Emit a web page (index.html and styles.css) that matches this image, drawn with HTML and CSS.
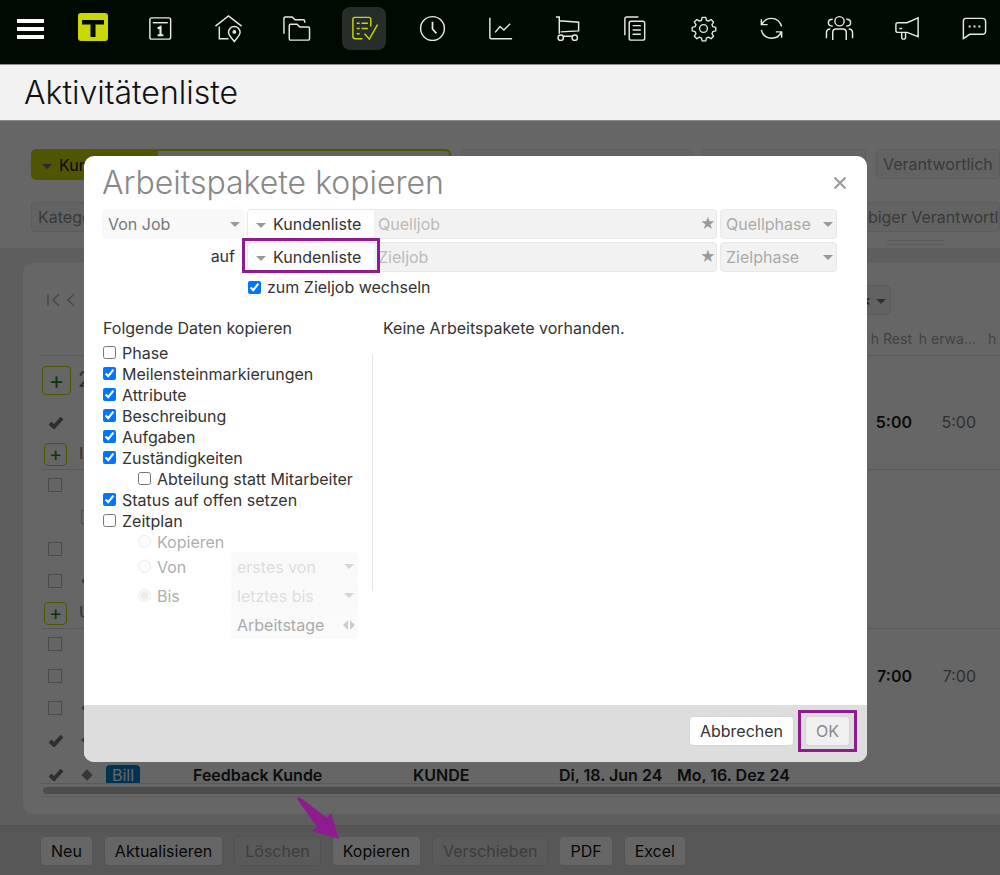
FILE: index.html
```
<!DOCTYPE html>
<html lang="de">
	<head>
		<meta charset="utf-8">
		<title>Aktivitätenliste</title>
		<link rel="stylesheet" href="styles.css">
	</head>
	<body>
		<header class="topbar">
			<button class="menu" type="button" aria-label="Menü"><span></span><span></span><span></span></button>
			<nav class="nav">
				<a href="#" aria-label="Start"><svg class="logo" viewBox="0 0 30 28"><rect width="30" height="28" rx="3" fill="#c8d800"/><path d="M4 7h22v4.500H17.500V24h-5V11.500H4z" fill="#000a00"/></svg></a>
				<a href="#" aria-label="Kalender"><svg viewBox="0 0 30 30"><rect x="4" y="4" width="21.500" height="22" rx="2"/><path d="M7 9h15.500"/><path d="M12 15l3-1.500V22M12 22h6" stroke-width="2.200"/></svg></a>
				<a href="#" aria-label="Standort"><svg viewBox="0 0 30 30"><path d="M1.500 12.500L15 2l13.500 10.500M5.500 13v12.500h9.500M21 28.500c-3-4-6-6.500-6-9.500a6 6 0 0 1 12 0c0 3-3 5.500-6 9.500z"/><circle cx="21" cy="18.500" r="1.200" fill="#fff"/></svg></a>
				<a href="#" aria-label="Projekte"><svg viewBox="0 0 30 30"><path d="M2 20.500V4.500Q2 3 3.500 3h7l3 3h8.500q1.500 0 1.500 1.500V9"/><path d="M7.500 12q0-1.500 1.500-1.500h6.500l3 3H27q1.500 0 1.500 1.500v10.500q0 1.500-1.500 1.500H9q-1.500 0-1.500-1.500z"/></svg></a>
				<a class="active" href="#" aria-label="Aktivitäten"><svg viewBox="0 0 30 30"><path d="M13 25.500H5.500Q3 25.500 3 23V5.500Q3 3.500 5 3.500h14.500q2 0 2 2V13M7 9.500h3M12 9.500h6.500M7 15h3M12 15h6.500M7 20.500h3M15 20.500l5 5.500 8.500-15"/></svg></a>
				<a href="#" aria-label="Zeiten"><svg viewBox="0 0 30 30"><circle cx="15" cy="15" r="12.300"/><path d="M15 8v7.500l4 4.500" stroke-width="1.800"/></svg></a>
				<a href="#" aria-label="Auswertung"><svg viewBox="0 0 30 30"><path d="M4 4v20q0 1.500 1.500 1.500H27M9.500 19l5-6 4 3.500L25 10"/></svg></a>
				<a href="#" aria-label="Einkauf"><svg viewBox="0 0 30 30"><path d="M3 3h3.500v17.500M6.500 7L26.500 8.500v9L8 18.500M10.500 23h9"/><circle cx="8" cy="24.500" r="2.800"/><circle cx="22.500" cy="24.500" r="2.800"/></svg></a>
				<a href="#" aria-label="Dokumente"><svg viewBox="0 0 30 30"><path d="M4 22V5q0-2 2-2h12M12 12h8.500M12 16.500h8.500M12 21h8.500"/><rect x="8.500" y="7.500" width="16" height="19.500" rx="2"/></svg></a>
				<a href="#" aria-label="Einstellungen"><svg viewBox="-1 -1 32 32"><circle cx="15" cy="15" r="4.300"/><path d="M13 3.500h4l.7 3.200 2.300 1 2.800-1.800 2.800 2.800-1.800 2.800 1 2.300 3.200.7v4l-3.200.7-1 2.300 1.800 2.800-2.800 2.800-2.800-1.800-2.300 1-.7 3.200h-4l-.7-3.200-2.300-1-2.800 1.800-2.800-2.800 1.800-2.800-1-2.300-3.200-.7v-4l3.200-.7 1-2.300-1.800-2.800 2.800-2.800 2.800 1.800 2.300-1z" stroke-linejoin="round" transform="translate(.5 -.8)"/></svg></a>
				<a href="#" aria-label="Abgleich"><svg viewBox="0 0 30 30"><path d="M5 11Q8 4.500 15 4.500q8 0 10.500 8.500M4.500 5.500V11H11M4.500 16.500Q6.500 25 15 25q7.500 0 10-6M25.500 24.500V18.500H19.500"/></svg></a>
				<a href="#" aria-label="Team"><svg viewBox="0 0 30 30"><circle cx="15" cy="7.500" r="4.800"/><path d="M8 27V19q0-3.500 3.500-3.500h7q3.500 0 3.500 3.500v8M8 5.500Q3.500 5.500 3.500 9T8 12.500M22 5.500q4.500 0 4.500 3.500T22 12.500M1.500 25v-5.500q0-4 4-4M28.500 25v-5.500q0-4-4-4"/></svg></a>
				<a href="#" aria-label="Neuigkeiten"><svg viewBox="0 0 30 30"><path d="M5 9h9.500L26 4v19.500L14.500 19H5q-2 0-2-2v-6q0-2 2-2zM9 19v5q0 2 2 2t2-2v-5M6.500 15h3"/></svg></a>
				<a href="#" aria-label="Chat"><svg viewBox="0 0 30 30"><path d="M6 4.500h17q3.500 0 3.500 3.500v9.500q0 3.500-3.500 3.500H10l-6.500 4.500V7.500Q3.500 4.500 6 4.500z"/><path d="M9 13h2M14 13h2M19 13h2" stroke-width="2"/></svg></a>
			</nav>
		</header>
		<h1 class="page-title">Aktivitätenliste</h1>

		<div class="stage">
			<main class="workspace">
				<form class="filters">
					<div class="filter-row">
						<div class="filter-job">
							<button type="button"><i class="caret"></i>Kundenliste</button>
							<input type="text" aria-label="Job">
						</div>
						<input type="text" aria-label="Phase">
						<input type="text" aria-label="Status">
						<input type="text" aria-label="Verantwortlich" placeholder="Verantwortlich">
					</div>
					<div class="filter-row second">
						<input type="text" aria-label="Kategorie" placeholder="Kategorie">
						<input type="text" aria-label="Beliebiger Verantwortlicher" placeholder="Beliebiger Verantwortlicher">
					</div>
					<div class="grip"></div>
				</form>

				<section class="card">
					<div class="pager">
						<button type="button" aria-label="Erste Seite"><svg width="14" height="14" viewBox="0 0 14 14"><path d="M1 1v12M12 1L6 7l6 6"/></svg></button>
						<button type="button" aria-label="Zurück"><svg width="14" height="14" viewBox="0 0 14 14"><path d="M9 1L3 7l6 6"/></svg></button>
						<button class="columns" type="button" aria-label="Spalten">×<i class="caret"></i></button>
					</div>
					<div class="table-wrap">
						<table>
							<colgroup>
								<col class="c-check"><col class="c-mark"><col class="c-tag"><col class="c-name"><col class="c-who"><col class="c-from"><col class="c-to"><col class="c-rest"><col class="c-exp"><col>
							</colgroup>
							<thead>
								<tr><th></th><th></th><th></th><th></th><th></th><th></th><th></th><th class="num">h Rest</th><th class="num">h erwa...</th><th>h</th></tr>
							</thead>
							<tbody>
								<tr class="group big"><td colspan="10"><button class="plus" type="button" aria-label="Aufklappen">+</button>2</td></tr>
								<tr><td><svg class="tick" viewBox="0 0 16 13"><path d="M2 7l4 4 8-9"/></svg></td><td colspan="6"></td><td class="num"><b>5:00</b></td><td class="num">5:00</td><td></td></tr>
								<tr class="group line"><td colspan="10"><button class="plus" type="button" aria-label="Aufklappen">+</button>I</td></tr>
								<tr><td><span class="box"></span></td><td colspan="9"></td></tr>
								<tr><td></td><td><span class="box child"></span></td><td colspan="8"></td></tr>
								<tr><td><span class="box"></span></td><td colspan="9"></td></tr>
								<tr><td><span class="box"></span></td><td><i class="diamond"></i></td><td colspan="8"></td></tr>
								<tr class="group line"><td colspan="10"><button class="plus" type="button" aria-label="Aufklappen">+</button>U</td></tr>
								<tr><td><span class="box"></span></td><td colspan="9"></td></tr>
								<tr><td><span class="box"></span></td><td colspan="6"></td><td class="num"><b>7:00</b></td><td class="num">7:00</td><td></td></tr>
								<tr><td><span class="box"></span></td><td><i class="diamond"></i></td><td colspan="8"></td></tr>
								<tr><td><svg class="tick" viewBox="0 0 16 13"><path d="M2 7l4 4 8-9"/></svg></td><td><i class="diamond"></i></td><td colspan="8"></td></tr>
								<tr class="strong"><td><svg class="tick" viewBox="0 0 16 13"><path d="M2 7l4 4 8-9"/></svg></td><td><i class="diamond"></i></td><td><span class="tag">Bill</span></td><td>Feedback Kunde</td><td>KUNDE</td><td>Di, 18. Jun 24</td><td>Mo, 16. Dez 24</td><td></td><td></td><td></td></tr>
							</tbody>
						</table>
					</div>
					<div class="scroll"><div></div></div>
				</section>
			</main>

			<footer class="actions">
				<button type="button">Neu</button>
				<button type="button">Aktualisieren</button>
				<button type="button" disabled>Löschen</button>
				<button type="button">Kopieren</button>
				<button type="button" disabled>Verschieben</button>
				<button type="button">PDF</button>
				<button type="button">Excel</button>
			</footer>

			<div class="overlay">
				<form class="dialog" role="dialog" aria-labelledby="dlgTitle">
					<div class="dialog-head">
						<h2 id="dlgTitle">Arbeitspakete kopieren</h2>
						<button type="button" aria-label="Schließen"><svg width="14" height="14" viewBox="0 0 14 14"><path d="M1.500 1.500l11 11M12.500 1.500l-11 11"/></svg></button>
					</div>
					<div class="job-grid">
						<select class="soft" aria-label="Quelle"><option>Von Job</option></select>
						<div class="combo">
							<button type="button"><i class="caret"></i>Kundenliste</button>
							<input type="text" aria-label="Quelljob" placeholder="Quelljob">
							<span class="star">★</span>
						</div>
						<select aria-label="Quellphase"><option>Quellphase</option></select>
						<label class="to" for="target">auf</label>
						<div class="combo">
							<button type="button"><i class="caret"></i>Kundenliste</button>
							<input type="text" id="target" placeholder="Zieljob">
							<span class="star">★</span>
							<span class="mark mark-combo"></span>
						</div>
						<select aria-label="Zielphase"><option>Zielphase</option></select>
						<label class="check switch"><input type="checkbox" checked>zum Zieljob wechseln</label>
					</div>
					<div class="options">
						<fieldset>
							<legend>Folgende Daten kopieren</legend>
							<label class="check"><input type="checkbox">Phase</label>
							<label class="check"><input type="checkbox" checked>Meilensteinmarkierungen</label>
							<label class="check"><input type="checkbox" checked>Attribute</label>
							<label class="check"><input type="checkbox" checked>Beschreibung</label>
							<label class="check"><input type="checkbox" checked>Aufgaben</label>
							<label class="check"><input type="checkbox" checked>Zuständigkeiten</label>
							<label class="check sub"><input type="checkbox">Abteilung statt Mitarbeiter</label>
							<label class="check"><input type="checkbox" checked>Status auf offen setzen</label>
							<label class="check"><input type="checkbox">Zeitplan</label>
							<label class="check sub off"><input type="radio" name="plan" disabled>Kopieren</label>
							<div class="plan">
								<label class="check off"><input type="radio" name="plan" disabled>Von</label>
								<select aria-label="Von" disabled><option>erstes von</option></select>
								<label class="check off"><input type="radio" name="plan" checked disabled>Bis</label>
								<select aria-label="Bis" disabled><option>letztes bis</option></select>
								<button class="unit" type="button" disabled>Arbeitstage<svg width="12" height="10" viewBox="0 0 12 10"><path d="M5 0v10L0 5zM7 0v10l5-5z"/></svg></button>
							</div>
						</fieldset>
						<div class="divider"></div>
						<p>Keine Arbeitspakete vorhanden.</p>
					</div>
					<div class="dialog-foot">
						<button type="button">Abbrechen</button>
						<div class="ok-wrap">
							<button type="submit" disabled>OK</button>
							<span class="mark mark-ok"></span>
						</div>
					</div>
				</form>
			</div>
			<svg class="arrow" viewBox="0 0 48 48"><path d="M1 3Q2 0 5 2l26 20 4-5 8 26-27-8 5-4z"/></svg>
		</div>
	</body>
</html>
```
FILE: styles.css
```
* {
	box-sizing: border-box;
}

body {
	margin: 0;
	height: 100vh;
	display: flex;
	flex-direction: column;
	overflow: hidden;
	font-family: Inter, sans-serif;
	font-size: 16px;
	line-height: 20px;
	color: #333;
}

button, input, select {
	font: inherit;
	color: inherit;
}

button {
	cursor: pointer;
	padding: 0;
	border: none;
	background: none;
}

/* top navigation */
.topbar {
	display: flex;
	height: 65px;
	padding: 7px 3px 0 17px;
	background: #000a00;
	border-bottom: 1px solid #8c918c;
}

.menu {
	display: flex;
	flex-direction: column;
	justify-content: center;
	gap: 4px;
	width: 27px;
	height: 44px;
	margin-right: 27px;
}

.menu span {
	height: 4px;
	background: #fff;
}

.nav {
	flex: 1;
	display: flex;
	justify-content: space-between;
}

.nav a {
	display: flex;
	align-items: center;
	justify-content: center;
	width: 44px;
	height: 43px;
	border-radius: 8px;
}

.nav svg {
	width: 29px;
	height: 29px;
	fill: none;
	stroke: #e6e9e4;
	stroke-width: 1.5;
}

.nav svg.logo {
	width: 30px;
	height: 28px;
	margin-bottom: 3px;
	stroke: none;
}

.nav .active {
	background: #262d2b;
}

.nav .active svg {
	stroke: #c8d800;
}

.page-title {
	margin: 0;
	padding: 0 24px;
	font-size: 32px;
	font-weight: 300;
	line-height: 55px;
	color: #111;
	background: #f2f2f2;
}

/* list behind the dialog */
.stage {
	position: relative;
	flex: 1;
	min-height: 0;
	display: flex;
	flex-direction: column;
}

.workspace {
	flex: 1;
	min-height: 0;
	display: flex;
	flex-direction: column;
	background: #ececec;
}

.filters {
	height: 128px;
	padding: 29px 0 0 31px;
	background: #fff;
}

.filter-row {
	display: grid;
	grid-template-columns: 420px 231px 164px 1fr;
	gap: 10px;
}

.filter-row.second {
	grid-template-columns: 783px 1fr;
	margin-top: 22px;
}

.filters input {
	min-width: 0;
	width: 100%;
	height: 30px;
	padding: 0 0 0 6px;
	background: #f8f8f8;
	border: 1px solid #e6e6e6;
	border-radius: 4px;
}

.filters input::placeholder {
	color: #909090;
}

.filter-job {
	display: flex;
	height: 31px;
	background: #c8d800;
	border: 2px solid #c8d800;
	border-radius: 5px;
}

.filter-job button {
	width: 125px;
	padding-left: 9px;
	text-align: left;
	flex: none;
	color: #111;
}

.filter-job input {
	flex: 1;
	height: 27px;
	border: none;
	border-radius: 0 4px 4px 0;
}

.caret {
	display: inline-block;
	margin-right: 7px;
	vertical-align: middle;
	border: 5px solid transparent;
	border-top-color: #999;
	border-bottom: none;
}

.filter-job .caret {
	border-top-color: #666;
}

.grip {
	width: 57px;
	height: 5px;
	margin: 8px 0 0 856px;
	border: 1px solid #e4e4e4;
	border-left: none;
	border-right: none;
}

.card {
	flex: 1;
	min-height: 0;
	display: flex;
	flex-direction: column;
	margin: 15px 0 11px 23px;
	padding: 22px 0 17px 18px;
	background: #fff;
	border-radius: 10px 0 0 10px;
}

.pager {
	display: flex;
	align-items: center;
	gap: 4px;
	height: 30px;
	margin-bottom: 9px;
	padding-left: 6px;
}

.pager svg {
	display: block;
	fill: none;
	stroke: #b4b4b4;
	stroke-width: 1.5;
}

.pager .columns {
	width: 110px;
	height: 30px;
	margin-left: 698px;
	padding-right: 4px;
	text-align: right;
	background: #f4f4f4;
	border: 1px solid #e4e4e4;
	border-radius: 4px;
}

.columns .caret {
	margin: 0 0 0 5px;
	border-top-color: #777;
}

.table-wrap {
	flex: 1;
	min-height: 0;
	overflow: hidden;
	border-bottom: 1px solid #e2e2e2;
}

table {
	width: 100%;
	table-layout: fixed;
	border-collapse: collapse;
}

.c-check { width: 29px; }
.c-mark { width: 33px; }
.c-tag { width: 83px; }
.c-name { width: 220px; }
.c-who { width: 146px; }
.c-from { width: 118px; }
.c-to { width: 195px; }
.c-rest { width: 53px; }
.c-exp { width: 64px; }

th {
	height: 31px;
	padding: 0 6px;
	font-size: 14px;
	font-weight: 400;
	text-align: left;
	white-space: nowrap;
	color: #a6a6a6;
	border-bottom: 1px solid #e2e2e2;
}

td {
	height: 32px;
	padding: 0 0 0 7px;
	white-space: nowrap;
	color: #777;
}

td.num, th.num {
	padding: 0 6px 0 0;
	text-align: right;
}

td b, .strong td {
	font-weight: 600;
	color: #222;
}

.strong td {
	height: 37px;
}

.group td {
	padding-left: 3px;
}

.group.big td {
	height: 51px;
	padding-left: 1px;
	font-size: 22px;
}

.line td {
	height: 31px;
	line-height: 24px;
	border-bottom: 1px solid #e2e2e2;
}

.plus {
	width: 23px;
	height: 23px;
	margin-right: 12px;
	font-size: 20px;
	line-height: 20px;
	vertical-align: middle;
	color: #1f8a1f;
	border: 1px solid #c8d800;
	border-radius: 4px;
}

.big .plus {
	width: 29px;
	height: 29px;
	margin-right: 7px;
	font-size: 24px;
}

.box {
	display: block;
	width: 14px;
	height: 14px;
	border: 1px solid #bbb;
}

.box.child {
	margin-left: 4px;
}

.tick {
	display: block;
	width: 16px;
	height: 13px;
	fill: none;
	stroke: #777;
	stroke-width: 4;
}

.diamond {
	display: block;
	width: 8px;
	height: 8px;
	margin-left: 6px;
	background: #888;
	transform: rotate(45deg);
}

.strong .tag {
	margin-left: -4px;
	padding: 0 6px;
	font-weight: 400;
	color: #fff;
	background: #0080cc;
	border-radius: 4px;
}

.scroll {
	height: 13px;
	padding: 3px 0 3px 2px;
	border-bottom: 1px solid #e2e2e2;
}

.scroll div {
	height: 7px;
	background: #bebebe;
	border-radius: 4px 0 0 4px;
}

.actions {
	display: flex;
	gap: 11px;
	height: 50px;
	padding: 10px 40px;
	background: #dadada;
	border-top: 1px solid #d0d0d0;
}

.actions button, .dialog-foot button {
	height: 30px;
	padding: 0 10px;
	background: #fff;
	border: 1px solid #d4d4d4;
	border-radius: 4px;
}

.actions button {
	color: #111;
}

.actions button:disabled {
	color: #999;
	background: #e0e0e0;
	border-color: #ccc;
}

/* dialog */
.overlay {
	position: absolute;
	inset: 0;
	display: flex;
	align-items: flex-start;
	padding: 35px 133px 0 84px;
	background: rgba(0, 0, 0, .6);
	border-top: 1px solid #8a8a8a;
}

.dialog {
	flex: 1;
	background: #fff;
	border-radius: 10px;
	overflow: hidden;
}

.dialog-head {
	display: flex;
	align-items: center;
	justify-content: space-between;
	height: 53px;
	padding: 0 20px 0 18px;
}

.dialog-head h2 {
	margin: 0;
	font-size: 32px;
	font-weight: 300;
	color: #888;
}

.dialog-head button {
	height: 14px;
}

.dialog-head svg {
	display: block;
	fill: none;
	stroke: #999;
	stroke-width: 2;
}

.job-grid {
	display: grid;
	grid-template-columns: 142px 1fr 117px;
	grid-auto-rows: 30px;
	gap: 3px;
	padding: 0 30px 0 18px;
}

select {
	appearance: none;
	min-width: 0;
	padding: 0 16px 0 5px;
	color: #aaa;
	background: #f2f2f2 url("data:image/svg+xml,%3Csvg xmlns='http://www.w3.org/2000/svg' width='10' height='5'%3E%3Cpath d='M0 0h10L5 5z' fill='%23999'/%3E%3C/svg%3E") no-repeat right 3px center;
	border: 1px solid #e8e8e8;
	border-radius: 4px;
	opacity: 1;
}

select.soft {
	color: #777;
	background-color: #f8f8f8;
	border-color: #f8f8f8;
}

.combo {
	position: relative;
	display: flex;
	align-items: center;
	background: #f2f2f2;
	border: 1px solid #e8e8e8;
	border-radius: 4px;
}

.combo button {
	flex: none;
	width: 126px;
	height: 28px;
	padding-left: 8px;
	text-align: left;
	background: #fff;
	border-radius: 4px 0 0 4px;
}

.combo input {
	flex: 1;
	min-width: 0;
	padding: 0 4px;
	background: none;
	border: none;
}

.combo input::placeholder {
	color: #bbb;
}

.star {
	width: 16px;
	font-size: 15px;
	color: #999;
}

.mark {
	position: absolute;
	border: 3px solid #8f1c8f;
}

.mark-combo {
	top: -5px;
	left: -6px;
	width: 138px;
	height: 35px;
}

.to {
	padding-right: 9px;
	line-height: 28px;
	text-align: right;
}

.check {
	display: flex;
	align-items: center;
	gap: 6px;
	height: 21px;
	white-space: nowrap;
}

.check input {
	width: 13px;
	height: 13px;
	margin: 0;
}

.switch {
	grid-column: 2;
	height: 24px;
	padding-left: 1px;
}

.options {
	display: grid;
	grid-template-columns: 270px 1px 1fr;
	padding: 13px 18px 66px;
}

fieldset {
	min-width: 0;
	margin: 0;
	padding: 0 14px 0 1px;
	border: none;
}

legend {
	margin-bottom: 4px;
	padding: 0;
}

.sub {
	padding-left: 35px;
}

.off {
	opacity: .4;
}

.plan {
	display: grid;
	grid-template-columns: 1fr 127px;
	grid-auto-rows: 29px;
	padding-left: 35px;
}

.plan .check {
	height: 29px;
}

.plan select {
	border-color: #f2f2f2;
	opacity: .4;
}

.unit {
	grid-column: 2;
	display: flex;
	align-items: center;
	justify-content: space-between;
	padding: 0 3px 0 6px;
	color: #aaa;
	background: #fafafa;
	border-radius: 4px;
}

.unit svg {
	fill: #ccc;
}

.divider {
	margin: 36px 0 48px;
	background: #e4e4e4;
}

.options p {
	margin: 0;
	padding-left: 10px;
}

.dialog-foot {
	display: flex;
	gap: 11px;
	height: 57px;
	padding: 11px 17px;
	justify-content: flex-end;
	background: #ddd;
}

.dialog-foot button:disabled {
	color: #888;
	background: #f0f0f0;
}

.ok-wrap {
	position: relative;
}

.mark-ok {
	top: -6px;
	left: -7px;
	right: -7px;
	height: 42px;
}

.arrow {
	position: absolute;
	left: 296px;
	bottom: 31px;
	width: 48px;
	height: 48px;
	fill: #8f1c8f;
}
```
